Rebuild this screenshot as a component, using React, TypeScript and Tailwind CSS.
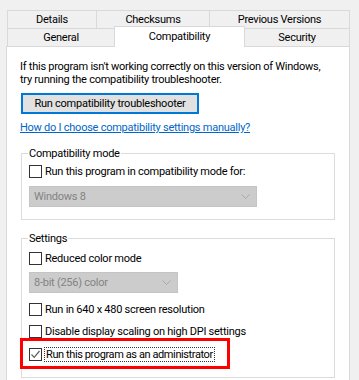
import { ReactNode } from 'react'

function CheckBox({ checked }: { checked?: boolean }) {
  return (
    <span className="w-[13px] h-[13px] shrink-0 border border-[#333333] bg-white flex items-center justify-center">
      {checked && (
        <svg width="11" height="11" viewBox="0 0 11 11">
          <path d="M1.5 5.5 L4.2 8.3 L9.5 2" stroke="#5c5c5c" strokeWidth="1.2" fill="none" />
        </svg>
      )}
    </span>
  )
}

function Option({ checked, focused, mt, children }: { checked?: boolean; focused?: boolean; mt: string; children: ReactNode }) {
  return (
    <div className={`flex items-center h-[13px] ml-[1px] gap-[3px] ${mt}`}>
      <CheckBox checked={checked} />
      {focused ? (
        <span className="-my-px -ml-px px-px tracking-[-0.4px] border border-dotted border-[#333333]">{children}</span>
      ) : (
        <span>{children}</span>
      )}
    </div>
  )
}

function Dropdown({ label, width, mt }: { label: string; width: string; mt: string }) {
  return (
    <div className={`flex items-center justify-between h-[21px] ml-[1px] pl-[4px] pr-[6px] bg-[#cccccc] border border-[#c4c4c4] text-[#838383] ${width} ${mt}`}>
      <span>{label}</span>
      <svg width="9" height="5" viewBox="0 0 9 5">
        <path d="M0.5 0.5 L4.5 4.5 L8.5 0.5" stroke="#a8a8a8" fill="none" />
      </svg>
    </div>
  )
}

export default function App() {
  return (
    <div className="relative w-[359px] h-[380px] overflow-hidden bg-[#f0f0f0] text-[11px] tracking-[-0.25px] leading-[13px] text-black font-['Roboto',sans-serif]">
      {/* Tabs */}
      <div className="ml-[7px] mt-[10px] w-[343px]">
        <div className="flex h-[18px]">
          <div className="w-[89px] border-l border-t border-[#d9d9d9] flex items-center justify-center">Details</div>
          <div className="w-[113px] border-l border-t border-[#d9d9d9] flex items-center justify-center">Checksums</div>
          <div className="flex-1 border-x border-t border-[#d9d9d9] flex items-center justify-center">Previous Versions</div>
        </div>
        <div className="flex h-[18px]">
          <div className="w-[107px] border-l border-t border-[#d9d9d9] flex items-center justify-center">General</div>
          <div className="relative z-10 w-[131px] h-[21px] -mt-[2px] shrink-0 bg-white border-x border-t border-[#d9d9d9] flex items-center justify-center pb-[2px]">
            Compatibility
          </div>
          <div className="flex-1 border-r border-t border-[#d9d9d9] flex items-center justify-center">Security</div>
        </div>
      </div>

      {/* Panel */}
      <div className="ml-[6px] w-[344px] h-[340px] bg-white border border-[#d9d9d9]">
        <p className="ml-[13px] mt-[13px] whitespace-nowrap">
          If this program isn't working correctly on this version of Windows,
          <br />
          try running the compatibility troubleshooter.
        </p>
        <button className="ml-[14px] mt-[7px] w-[178px] h-[21px] border-2 border-[#0078d7] bg-[#e1e1e1] flex items-center justify-center">
          Run compatibility troubleshooter
        </button>
        <div className="ml-[13px] mt-[7px]">
          <a className="text-[#0066cc] underline">How do I choose compatibility settings manually?</a>
        </div>

        <fieldset className="ml-[14px] mt-[13px] w-[314px] border border-[#dcdcdc] pl-[6px] pb-[12px]">
          <legend className="px-[1px]">Compatibility mode</legend>
          <Option mt="mt-[5px]">Run this program in compatibility mode for:</Option>
          <Dropdown label="Windows 8" width="w-[228px]" mt="mt-[8px]" />
        </fieldset>

        <fieldset className="ml-[14px] mt-[12px] w-[314px] border border-[#dcdcdc] pl-[6px] pb-[16px]">
          <legend className="px-[1px]">Settings</legend>
          <Option mt="mt-[7px]">Reduced color mode</Option>
          <Dropdown label="8-bit (256) color" width="w-[149px]" mt="mt-[7px]" />
          <Option mt="mt-[10px]">Run in 640 x 480 screen resolution</Option>
          <Option mt="mt-[9px]">Disable display scaling on high DPI settings</Option>
          <Option mt="mt-[10px]" checked focused>Run this program as an administrator</Option>
        </fieldset>
      </div>

      {/* highlight annotation */}
      <div className="absolute left-[20px] top-[338px] w-[210px] h-[31px] border-[3px] border-[#ff0000]" />
    </div>
  )
}
